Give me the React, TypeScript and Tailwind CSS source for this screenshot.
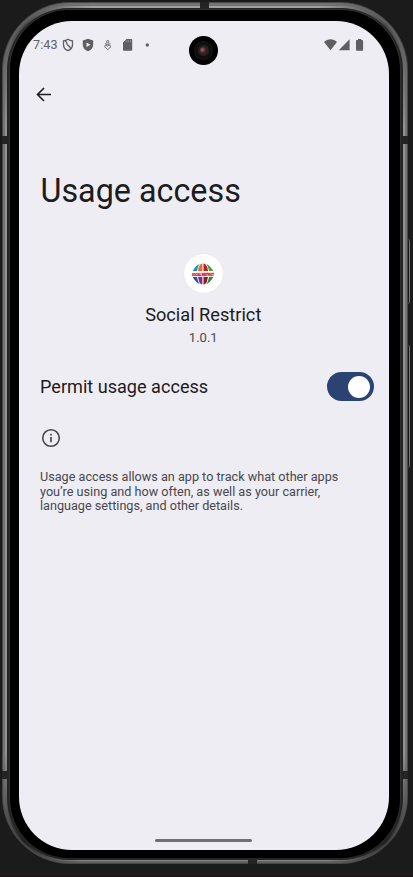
import React from "react";

function StatusIcons() {
  return (
    <svg className="absolute left-[42px] top-[16px]" width="92" height="16" viewBox="61 37 92 16" fill="none">
      <path d="M68 39.3c1.5 1 3 1.5 4.5 1.6v3.6c0 3-1.9 5.2-4.5 6.1-2.6-.9-4.5-3.1-4.5-6.1v-3.6c1.5-.1 3-.6 4.5-1.6Z" stroke="#5f5f61" strokeWidth="1.3" />
      <path d="M64.500 40.300c2.800.800 1.800 3 3 4.500 1.200 1.400 2.800 1.600 3.300 4.300" stroke="#5f5f61" strokeWidth="1.3" />
      <path d="M88 38.700l5.200 1.900v4.100c0 3.100-2.100 5.600-5.200 6.500-3.100-.9-5.200-3.400-5.200-6.500v-4.100l5.200-1.900Z" fill="#5f5f61" />
      <path d="M86.500 42.400v4.600l4-2.300-4-2.300Z" fill="#eeedf3" />
      <g stroke="#5f5f61" strokeWidth="1">
        <circle cx="107.700" cy="41.700" r="1.200" />
        <path d="M104.900 43.500c1 1.200 4.600 1.200 5.600 0M107.700 49.500c-1.300-1-2.900-2.100-2.900-3.200 0-1.200 1.800-1.400 2.900-.2 1.100-1.200 2.900-1 2.900.2 0 1.100-1.600 2.200-2.900 3.200Z" />
      </g>
      <path d="M126.500 39h4.900a.8.8 0 0 1 .8.8v10a.9.900 0 0 1-.9.900h-7.400a.9.900 0 0 1-.9-.9v-7.400l3.500-3.400Z" fill="#5f5f61" />
      <path d="M126.800 40.300v2M128.700 40.300v2M130.600 40.300v2" stroke="#a4a3a8" strokeWidth=".8" />
      <circle cx="147.300" cy="45" r="1.700" fill="#5f5f61" />
    </svg>
  );
}

function SignalIcons() {
  return (
    <svg className="absolute left-[304px] top-[16px]" width="42" height="16" viewBox="323 37 42 16" fill="#5f5f61">
      <path d="M330.500 50.300 324 42c4-3.600 9-3.600 13 0l-6.500 8.300Z" />
      <path d="M338.800 50.200 349.600 39.300v10.900h-10.800Z" />
      <path d="M358 39h3.200v1.100h1.200c.4 0 .7.300.7.700v9.200c0 .4-.3.700-.7.700h-5.700a.7.700 0 0 1-.7-.7v-9.200c0-.4.300-.7.700-.7h1.300V39Z" />
    </svg>
  );
}

function Logo() {
  return (
    <svg className="overflow-visible" width="24" height="22" viewBox="-1 0 24 22">
      <clipPath id="globe"><circle cx="11" cy="11" r="10.600" /></clipPath>
      <g clipPath="url(#globe)">
        <path d="M0 8 L7 0 H8 Q5.500 4 5 8Z" fill="#1a8fc4" />
        <path d="M6 8Q6.500 3 9.500 0H10.400V8Z" fill="#e2711d" />
        <path d="M11.500 0H12.500Q15.500 3 16 8H11.500Z" fill="#b3202c" />
        <path d="M14 0H15L22 8H17Q16.500 4 14 0Z" fill="#4f9e3a" />
        <path d="M0 14H5Q5.500 18 8 22H7Z" fill="#2750a5" />
        <path d="M6 14H10.400V22H9.500Q6.500 19 6 14Z" fill="#7b2d91" />
        <path d="M11.500 14H16Q15.500 19 12.500 22H11.500Z" fill="#8e1c22" />
        <path d="M17 14H22L15 22H14Q16.500 18 17 14Z" fill="#2f8439" />
      </g>
      <text transform="translate(11 12.700) scale(.62 1)" textAnchor="middle" fontFamily="Roboto, sans-serif" fontSize="4.200" fontWeight="900" fill="#d3202a" stroke="#d3202a" strokeWidth=".3">SOCIAL RESTRICT</text>
    </svg>
  );
}

function Camera() {
  return (
    <div className="absolute left-[170px] top-[15px] flex size-[29px] items-center justify-center rounded-full bg-black">
      <div className="flex size-[19px] items-center justify-center rounded-full border border-[#181818] bg-[#0e0e0e]">
        <div className="flex size-[11px] items-center justify-center rounded-full bg-[#262224]">
          <div className="size-[7px] rounded-full bg-[radial-gradient(circle_at_35%_40%,#8d7478,#551a2a_50%,#1c1018)]" />
        </div>
      </div>
    </div>
  );
}

export default function App() {
  return (
    <div className="relative h-[877px] w-[413px] overflow-hidden bg-[#1b1b1b] pl-[2px] pt-[2px] font-[Roboto,sans-serif]">
      <div className="absolute left-[407px] top-[239px] h-[65px] w-[3px] rounded-r border-r border-[#777] bg-[#161616]" />
      <div className="absolute left-[407px] top-[345px] h-[123px] w-[3px] rounded-r border-r border-[#777] bg-[#161616]" />
      <div className="relative h-[862px] w-[406px] rounded-[68px] bg-[#484848] p-px">
        <div className="h-full rounded-[67px] bg-[conic-gradient(#747474_15deg,#5c5c5c_24deg,#747474_33deg,#747474_148deg,#3c3c3c_156deg,#626262_164deg,#626262_196deg,#3c3c3c_204deg,#747474_212deg,#747474_327deg,#5c5c5c_336deg,#747474_345deg)] px-[2px] pb-[2px] pt-[3px]">
          <div className="h-full rounded-[64px] bg-[conic-gradient(#a0a0a0_15deg,#454545_24deg,#929292_33deg,#929292_148deg,#1c1c1c_156deg,#858585_164deg,#858585_196deg,#1c1c1c_204deg,#929292_212deg,#929292_327deg,#454545_336deg,#a0a0a0_345deg)] px-[2px] pb-px pt-[2px]">
            <div className="h-full rounded-[62px] bg-[#242424] px-[2px] pb-[2px] pt-px">
              <div className="h-full rounded-[60px] bg-[#303030] px-px pt-px">
                <div className="h-full rounded-[59px] bg-black pb-[8px] pl-[9px] pr-[11px] pt-[11px]">
                  <Screen />
                </div>
              </div>
            </div>
          </div>
        </div>
        <div className="absolute left-[198px] top-0 h-[7px] w-[9px] bg-[#242424]" />
        <div className="absolute bottom-0 left-[246px] h-[6px] w-[9px] bg-[#242424]" />
        <div className="absolute left-0 top-[134px] h-[8px] w-[6px] bg-[#242424]" />
        <div className="absolute right-0 top-[134px] h-[8px] w-[6px] bg-[#242424]" />
        <div className="absolute left-0 top-[769px] h-[8px] w-[6px] bg-[#242424]" />
        <div className="absolute right-0 top-[769px] h-[8px] w-[6px] bg-[#242424]" />
      </div>
      <div className="absolute bottom-0 left-0 h-px w-full bg-[#1c1014]" />
    </div>
  );
}

function Screen() {
  return (
    <main className="relative flex h-[829px] w-[369.500px] flex-col overflow-hidden rounded-[53px] bg-[#eeedf3] text-[#1c1b20]">
      <div className="h-[65px] shrink-0 pl-[14px] pt-[16px] text-[12.500px] leading-[16px] tracking-[0.100px] text-[#616164]">7:43</div>
      <StatusIcons />
      <Camera />
      <SignalIcons />
      <svg className="ml-[16px] shrink-0" width="18" height="18" viewBox="0 0 18 18" fill="none" stroke="#1d1c21" strokeWidth="1.600">
        <path d="M16 8.500H2.500M9 2 2.500 8.500 9 15" />
      </svg>
      <h1 className="ml-[21.500px] mt-[66px] whitespace-nowrap text-[32.300px] leading-[42px] font-normal">Usage access</h1>
      <div className="mt-[42px] flex flex-col items-center pr-px">
        <div className="flex size-[39px] items-center justify-center rounded-full bg-white shadow-[0_0_1px_#d8d7dd]"><Logo /></div>
        <div className="mt-[10px] text-[18.200px] leading-[24px]">Social Restrict</div>
        <div className="mt-[2px] text-[13px] leading-[18px] text-[#4a494e]">1.0.1</div>
      </div>
      <div className="mt-[25px] flex items-center justify-between pl-[21px] pr-[14.500px]">
        <span className="pt-px text-[18.100px] leading-[28px]">Permit usage access</span>
        <div className="flex h-[29px] w-[47px] items-center justify-end rounded-full bg-[#2b4373] pr-[4px]">
          <div className="size-[22px] rounded-full bg-white" />
        </div>
      </div>
      <svg className="ml-[22px] mt-[27px] shrink-0" width="20" height="20" viewBox="0 0 20 20" fill="none" stroke="#48474c" strokeWidth="1.600">
        <circle cx="10" cy="10" r="8.300" />
        <path d="M10 9v5.300M10 5.700v1.700" strokeWidth="1.700" />
      </svg>
      <p className="ml-[21px] mt-[22px] whitespace-nowrap text-[12.650px] leading-[14.700px] text-[#48474c]">
        Usage access allows an app to track what other apps<br />
        you’re using and how often, as well as your carrier,<br />
        language settings, and other details.
      </p>
      <div className="absolute bottom-[8.500px] left-[136px] h-[3px] w-[97px] rounded-full bg-[#707073]" />
    </main>
  );
}
